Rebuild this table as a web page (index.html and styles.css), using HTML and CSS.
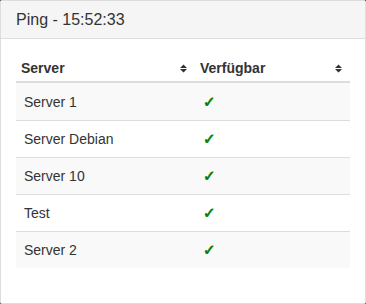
FILE: index.html
```html
<!DOCTYPE html>
<html>
<head>
<meta charset="utf-8">
<link rel="stylesheet" href="styles.css">
</head>
<body>
<div class="panel">
  <div class="panel-heading">Ping - 15:52:33</div>
  <div class="panel-body">
    <table class="ping-table">
      <colgroup><col class="col-server"><col class="col-avail"></colgroup>
      <thead>
        <tr>
          <th><div class="th-inner"><span>Server</span><svg class="sort" width="7" height="9" viewBox="0 0 7 9"><path d="M0 3.9 L3.5 0.4 L7 3.9 Z M0 5.1 L3.5 8.6 L7 5.1 Z" fill="#333"/></svg></div></th>
          <th><div class="th-inner"><span>Verfügbar</span><svg class="sort" width="7" height="9" viewBox="0 0 7 9"><path d="M0 3.9 L3.5 0.4 L7 3.9 Z M0 5.1 L3.5 8.6 L7 5.1 Z" fill="#333"/></svg></div></th>
        </tr>
      </thead>
      <tbody>
        <tr class="odd"><td>Server 1</td><td><span class="ok">✓</span></td></tr>
        <tr><td>Server Debian</td><td><span class="ok">✓</span></td></tr>
        <tr class="odd"><td>Server 10</td><td><span class="ok">✓</span></td></tr>
        <tr><td>Test</td><td><span class="ok">✓</span></td></tr>
        <tr class="odd"><td>Server 2</td><td><span class="ok">✓</span></td></tr>
      </tbody>
    </table>
  </div>
</div>
</body>
</html>
```

FILE: styles.css
```css
html, body {
  margin: 0;
  padding: 0;
  background: #555;
}
body {
  font-family: "Liberation Sans", Arial, sans-serif;
  font-size: 14px;
  color: #333;
}
.panel {
  width: 366px;
  box-sizing: border-box;
  background: #fff;
  border: 1px solid #ddd;
  border-radius: 2px;
  overflow: hidden;
}
.panel-heading {
  height: 17px;
  padding: 10px 15px;
  font-size: 16px;
  line-height: 17px;
  background: #f5f5f5;
  border-bottom: 1px solid #ddd;
  color: #333;
}
.panel-body {
  padding: 15px 15px 15px;
}
.ping-table {
  width: 334px;
  border-collapse: separate;
  border-spacing: 0;
  margin-bottom: 20px;
  table-layout: fixed;
}
.col-server { width: 179px; }
.col-avail { width: 155px; }
.ping-table th {
  padding: 4px 0 3px 5px;
  line-height: 20px;
  text-align: left;
  font-weight: bold;
  border-bottom: 2px solid #ddd;
}
.th-inner {
  display: flex;
  align-items: center;
  justify-content: space-between;
  padding-right: 8px;
}
.sort {
  display: block;
}
.ping-table td {
  padding: 8px;
  line-height: 20px;
  border-top: 1px solid #ddd;
}
.ping-table tbody tr:first-child td {
  border-top: 0;
  padding-top: 9px;
}
.ping-table tr.odd td {
  background: #f9f9f9;
}
.ok {
  color: #008000;
  font-family: "DejaVu Sans", sans-serif;
  font-size: 15px;
  -webkit-text-stroke: 0.7px #008000;
}
```
